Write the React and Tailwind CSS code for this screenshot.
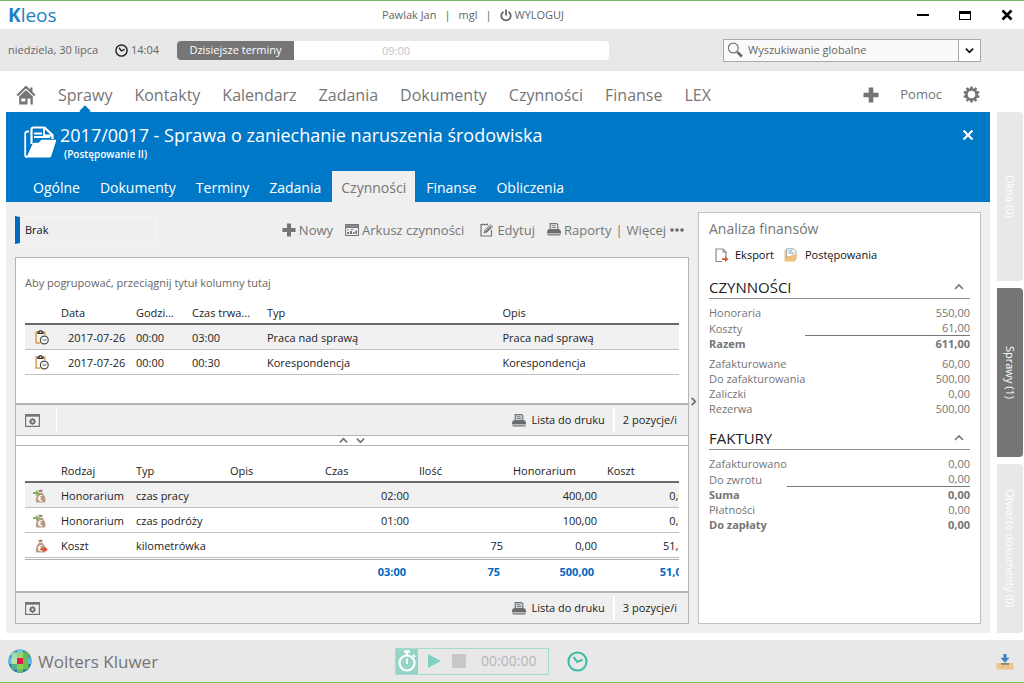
import React from "react";

const NAV = ["Sprawy", "Kontakty", "Kalendarz", "Zadania", "Dokumenty", "Czynności", "Finanse", "LEX"];
const TABS = ["Ogólne", "Dokumenty", "Terminy", "Zadania", "Czynności", "Finanse", "Obliczenia"];

const ACTIVITIES = [
  { date: "2017-07-26", time: "00:00", duration: "03:00", type: "Praca nad sprawą", note: "Praca nad sprawą" },
  { date: "2017-07-26", time: "00:00", duration: "00:30", type: "Korespondencja", note: "Korespondencja" },
];

const ITEMS = [
  { kind: "Honorarium", type: "czas pracy", time: "02:00", qty: "", fee: "400,00", cost: "0,00" },
  { kind: "Honorarium", type: "czas podróży", time: "01:00", qty: "", fee: "100,00", cost: "0,00" },
  { kind: "Koszt", type: "kilometrówka", time: "", qty: "75", fee: "0,00", cost: "51,00" },
];

const SECTIONS = [
  {
    title: "CZYNNOŚCI",
    rows: [
      { label: "Honoraria", value: "550,00" },
      { label: "Koszty", value: "61,00", line: true },
      { label: "Razem", value: "611,00", bold: true, gap: true },
      { label: "Zafakturowane", value: "60,00" },
      { label: "Do zafakturowania", value: "500,00" },
      { label: "Zaliczki", value: "0,00" },
      { label: "Rezerwa", value: "500,00" },
    ],
  },
  {
    title: "FAKTURY",
    rows: [
      { label: "Zafakturowano", value: "0,00" },
      { label: "Do zwrotu", value: "0,00", line: true },
      { label: "Suma", value: "0,00", bold: true },
      { label: "Płatności", value: "0,00" },
      { label: "Do zapłaty", value: "0,00", bold: true },
    ],
  },
];

function HomeIcon() {
  return (
    <svg width="20" height="20" viewBox="0 0 20 20" aria-hidden="true">
      <path d="M10 0.5 0.5 9.8l1.5 1.5L10 3.5l8 7.8 1.5-1.5-3-3V2.5h-2.3v2.1z" fill="#757575" />
      <path fillRule="evenodd" d="M10 5 3.2 11.6V19.5h8.3v-6h3v6h2.3v-7.9zM5.3 13.5h4v3h-4z" fill="#757575" />
    </svg>
  );
}

function PlusIcon({ size = 16 }) {
  return (
    <svg width={size} height={size} viewBox="0 0 16 16" aria-hidden="true">
      <path d="M5.7 0.5h4.6v5.2h5.2v4.6h-5.2v5.2H5.7v-5.2H0.5V5.7h5.2z" fill="#757575" />
    </svg>
  );
}

function GearIcon() {
  const teeth = [0, 36, 72, 108, 144, 180, 216, 252, 288, 324];
  return (
    <svg width="17" height="17" viewBox="0 0 17 17" aria-hidden="true">
      <circle cx="8.5" cy="8.5" r="5" fill="none" stroke="#757575" strokeWidth="2.5" />
      {teeth.map((a) => (
        <path key={a} d="M6.9 3.2 7.4 0.4h2.2l0.5 2.8z" fill="#757575" transform={`rotate(${a} 8.5 8.5)`} />
      ))}
    </svg>
  );
}

function ClockIcon({ size, color, width }) {
  return (
    <svg width={size} height={size} viewBox="0 0 20 20" fill="none" stroke={color} strokeWidth={width} aria-hidden="true">
      <circle cx="10" cy="10" r="8.6" />
      <path d="M6.3 5.8 9.8 10.5 14.8 8.2" />
    </svg>
  );
}

function PowerIcon() {
  return (
    <svg width="12" height="13" viewBox="0 0 12 13" fill="none" stroke="#666" strokeWidth="1.8" aria-hidden="true">
      <path d="M3.5 2.7a4.7 4.7 0 1 0 5 0M6 0.5v6" />
    </svg>
  );
}

function FolderIcon() {
  return (
    <svg width="33" height="33" viewBox="0 0 33 33" aria-hidden="true">
      <path d="M5 5.5H3.2Q1.2 5.5 1.2 8V29q0 2 2 2" fill="none" stroke="#fff" strokeWidth="1.8" />
      <path d="M7.5 18V3.5Q7.5 1.5 9.5 1.5H20.5L28.5 9V13" fill="none" stroke="#fff" strokeWidth="2.2" />
      <path d="M20 1.5V9.5H28.5" fill="none" stroke="#fff" strokeWidth="1.8" />
      <path d="M10 7.5h8M10 11h16" stroke="#fff" strokeWidth="1.8" />
      <path d="M2.5 31.5 8.5 18q.5-1.2 1.8-1.2h4.2l3-3h13.7q1.3 0 .9 1.3L27.3 30q-.6 1.5-2.2 1.5z" fill="#fff" />
    </svg>
  );
}

function SheetIcon() {
  return (
    <svg width="14" height="12" viewBox="0 0 14 12" aria-hidden="true">
      <path fillRule="evenodd" d="M0 0h14v12H0zM1 4v7h12V4z" fill="#757575" />
      <path d="M1 2h12" stroke="#b0b0b0" strokeWidth=".8" />
      <path d="M2 8h2v2H2zM5 7h2v3H5zM8 8h1.500v2H8zM10.300 6.500h1.700V10h-1.700zM2 5.500h1.500v1H2zM6 5h2v1H6z" fill="#757575" />
    </svg>
  );
}

function EditIcon() {
  return (
    <svg width="14" height="14" viewBox="0 0 14 14" aria-hidden="true">
      <path d="M8 1.5H1V13h10.5V7" fill="none" stroke="#757575" strokeWidth="1.2" />
      <path d="M2.5 .5v2M5 .5v2M7.5 .5v2" stroke="#757575" strokeWidth="1" />
      <path d="M3.5 10.5 4.5 7 10.5 1.2 13 3.5 7 9.6z" fill="#757575" />
      <path d="M5 8 11 2.5M9.6 1.8l2.6 2.6" stroke="#eee" strokeWidth=".8" />
    </svg>
  );
}

function PrinterIcon({ paper = "#efefef" }) {
  return (
    <svg width="14" height="13" viewBox="0 0 14 13" aria-hidden="true">
      <path d="M3.2 .6h6.5l1.1 1.1v5H3.2z" fill={paper} stroke="#757575" strokeWidth="1.2" />
      <path d="M4.8 2.7h3.7M4.8 4.5h4.5" stroke="#757575" strokeWidth=".9" />
      <path d="M1.3 6.3h11.4L14 8.3v2.2H0V8.300z" fill="#6b6b6b" />
      <path d="M.6 11h12.8v1.6H.6z" fill="#8a8a8a" />
      <path d="M1.5 10.7h11" stroke="#ccc" strokeWidth=".6" />
    </svg>
  );
}

function ClipboardIcon() {
  return (
    <svg width="14" height="15" viewBox="0 0 14 15" fill="none" aria-hidden="true">
      <path d="M3.2 2.2H1.1V13H5.5M7.8 2.2H9.8V5" stroke="#dc9b45" strokeWidth="1.5" />
      <path d="M3 3.3V1.9h1.2Q4.3.6 5.5.6T6.800 1.9H8v1.4z" fill="#fff" stroke="#333" strokeWidth="1.2" />
      <circle cx="9.3" cy="10" r="3.9" fill="#fff" stroke="#4a4a52" strokeWidth="1.2" />
      <path d="M7.6 9.2 9.3 10.6 11.5 9.2" stroke="#4a4a52" strokeWidth="1" />
    </svg>
  );
}

function MoneyBagIcon({ outgoing }) {
  return (
    <svg width="15" height="14" viewBox="0 0 15 14" aria-hidden="true">
      <path d="M5 .5 6.3 1.2 7.5.4 8.7 1.2 10 .5 8.9 3H6.1z" fill="#9c8672" />
      <path d="M5.5 3.7h4l2.5 4.3q1.5 3.2-.2 5.5H3.600q-1.700-2.300-.2-5.500z" fill="#b69a82" />
      <path d="M9.3 6.8Q6.3 5.8 6 9.2T9.3 11.6M4.8 8.5h3.3M4.8 10h3.3" fill="none" stroke="#fff" strokeWidth="1.1" />
      {outgoing ? (
        <path d="M7.5 9.3h3.5V7.3l3.9 3.1-3.9 3.1v-2H7.500z" fill="#dd5236" />
      ) : (
        <path d="M0 2.9h3V1L6.5 3.9 3 6.9V5H0z" fill="#86b05b" />
      )}
    </svg>
  );
}

function WindowGearIcon() {
  return (
    <svg width="15" height="13" viewBox="0 0 15 13" aria-hidden="true">
      <rect x=".6" y=".6" width="13.8" height="11.8" fill="none" stroke="#757575" strokeWidth="1.2" />
      <path d="M0 0h15v2.7H0z" fill="#757575" />
      <circle cx="7.5" cy="7.5" r="2.1" fill="none" stroke="#757575" strokeWidth="1.7" />
      <path d="M7.5 4v7M4 7.5h7M5 5l5 5M10 5l-5 5" stroke="#757575" strokeWidth=".9" />
      <circle cx="7.5" cy="7.5" r="1" fill="#efefef" />
    </svg>
  );
}

function Chevron({ d, color = "#757575", size = 10, width = 1.6 }) {
  const paths = { up: "M1 7 5 3l4 4", down: "M1 3l4 4 4-4", right: "M3 1l4 4-4 4" };
  return (
    <svg width={size} height={size} viewBox="0 0 10 10" fill="none" stroke={color} strokeWidth={width} aria-hidden="true">
      <path d={paths[d]} />
    </svg>
  );
}

function ExportIcon() {
  return (
    <svg width="14" height="15" viewBox="0 0 14 15" aria-hidden="true">
      <path d="M7 13.5H1V1H8l3 3v5" fill="none" stroke="#8b8b8b" strokeWidth="1.2" />
      <path d="M8 1v3.2h3" fill="none" stroke="#8b8b8b" />
      <path d="M7 10.3h3V8.3l3.5 2.9L10 14.1v-2H7z" fill="#d2552f" />
    </svg>
  );
}

function CasesIcon() {
  return (
    <svg width="14" height="14" viewBox="0 0 14 14" aria-hidden="true">
      <path d="M.3 2.5 3.5 1v12L.3 13.5z" fill="#f0cf94" />
      <path d="M2.5.8h7L12 3.2V11H2.5z" fill="#fff" stroke="#9aa4ab" strokeWidth="1" />
      <path d="M4.3 3h4M4.3 5h6" stroke="#7f9bb0" strokeWidth="1" />
      <path d="M1 13.5 3.500 8h3l1.5-1.5H13.5L11 13.5z" fill="#eec07c" />
    </svg>
  );
}

function WkLogo() {
  return (
    <svg width="24" height="24" viewBox="0 0 24 24" aria-hidden="true">
      <defs>
        <clipPath id="globe"><circle cx="12" cy="12" r="11.5" /></clipPath>
      </defs>
      <g clipPath="url(#globe)">
        <path d="M0 0h24v24H0z" fill="#3a8fc8" />
        <path d="M0 13h24v11H0z" fill="#1f72b4" />
        <path d="M3.5 3.5h17v17h-17z" fill="#6cc04a" />
        <path d="M9 0h6v4H9z" fill="#6fc5d8" />
        <path d="M9 20h6v4H9z" fill="#69bb6c" />
        <path d="M0 9h4v6H0zM20 9h4v6h-4z" fill="#5cb8e0" />
        <path d="M3.5 3.5H9V9H3.5z" fill="#a3d9b8" />
        <path d="M15 3.5h5.5V9H15z" fill="#62bb52" />
        <path d="M3.5 15H9v5.5H3.5z" fill="#55b08a" />
        <path d="M9 3.5h6V9H9z" fill="#9fd56e" />
        <path d="M3.5 9H9v6H3.5z" fill="#b9e29c" />
        <path d="M9 15h6v5.5H9z" fill="#8acb52" />
        <path d="M9 9h6v6H9z" fill="#e5174f" />
      </g>
    </svg>
  );
}

function StopwatchIcon() {
  return (
    <svg width="20" height="22" viewBox="0 0 20 22" fill="none" stroke="#fff" aria-hidden="true">
      <circle cx="10" cy="13" r="7.5" strokeWidth="2.2" />
      <path d="M7 1.5h6M10 2v4M16 5l2 2" strokeWidth="2.4" />
      <path d="M10 8.5V14" strokeWidth="1.8" />
    </svg>
  );
}

function DownloadIcon() {
  return (
    <svg width="18" height="17" viewBox="0 0 18 17" aria-hidden="true">
      <path d="M.5 10H17.5V16.5H.5z" fill="#eac58c" />
      <path d="M5 10h8v1.8H5z" fill="#8a7f78" />
      <path d="M7.5 1h3v3.8h3L9 9.8 4.5 4.8h3z" fill="#3d7fc0" />
    </svg>
  );
}

function SearchIcon() {
  return (
    <svg width="16" height="16" viewBox="0 0 16 16" fill="none" aria-hidden="true">
      <circle cx="6.3" cy="6" r="4.9" stroke="#777" strokeWidth="1.2" />
      <path d="M9.8 9.5 11 10.7" stroke="#777" strokeWidth="1.5" />
      <path d="M10.8 10.5 14.8 14.5" stroke="#666" strokeWidth="2.6" />
    </svg>
  );
}

function GridFooter({ count, divider }) {
  return (
    <div className="flex h-8 shrink-0 items-center border-t-2 border-[#b5b5b5] bg-[#efefef] pl-[9px] pr-[11px]">
      <button type="button" aria-label="Ustawienia widoku"><WindowGearIcon /></button>
      {divider && <span className="ml-4 h-6 w-px bg-white" />}
      <button type="button" className="ml-auto flex items-center gap-[5px]">
        <PrinterIcon paper="#c9d9e6" />
        Lista do druku
      </button>
      <span className="mx-2 h-6 w-0.5 bg-white" />
      <span>{count} pozycje/i</span>
    </div>
  );
}

function TopBar() {
  return (
    <div className="flex h-[29px] items-center border-t border-[#7db46c]">
      <span className="w-[37%] pl-2 text-[19px] leading-6 font-medium text-[#1d7fc4]"><b className="font-bold">K</b>leos</span>
      <div className="flex items-center gap-2 pl-[3px] text-[#666]">
        <span>Pawlak Jan</span><span>|</span><span>mgl</span><span>|</span>
        <button type="button" className="flex items-center gap-[3px]"><PowerIcon />WYLOGUJ</button>
      </div>
      <div className="ml-auto flex items-center gap-[29px] pr-2.5">
        <button type="button" aria-label="Minimalizuj"><svg width="13" height="12"><path d="M0 5h12v2H0z" /></svg></button>
        <button type="button" aria-label="Maksymalizuj"><svg width="13" height="12"><path fillRule="evenodd" d="M0 2h12v9H0zM1 5v5h10V5z" /></svg></button>
        <button type="button" aria-label="Zamknij"><svg width="13" height="12"><path d="M1.5 1.5l9 9M10.5 1.5l-9 9" stroke="#000" strokeWidth="2.6" /></svg></button>
      </div>
    </div>
  );
}

function StatusBar() {
  return (
    <div className="flex h-[42px] items-center bg-[#e8e8e8] pl-2 pr-[43px]">
      <span className="w-[107px] shrink-0 whitespace-nowrap text-[#666]">niedziela, 30 lipca</span>
      <div className="flex w-[62px] shrink-0 items-center gap-[3px] text-[#666]"><ClockIcon size={13} color="#222" width={2.2} />14:04</div>
      <div className="flex h-[19px] w-[432px] overflow-hidden rounded-sm bg-white">
        <button type="button" className="w-[117px] bg-[#757575] text-white">Dzisiejsze terminy</button>
        <span className="pl-[88px] leading-5 text-[#c4c4c4]">09:00</span>
      </div>
      <div className="ml-auto flex h-[23px] w-[258px] items-center border border-[#a9a9a9] bg-[#fafafa]">
        <label htmlFor="search" className="pl-[3px]" aria-label="Szukaj"><SearchIcon /></label>
        <input id="search" type="text" placeholder="Wyszukiwanie globalne" className="w-0 flex-1 pl-[5px] outline-none placeholder:text-[#666]" />
        <button type="button" aria-label="Zakres wyszukiwania" className="flex w-[22px] items-center justify-center self-stretch border-l border-[#a9a9a9] bg-white">
          <Chevron d="down" color="#111" size={9} width={2} />
        </button>
      </div>
    </div>
  );
}

function NavBar() {
  return (
    <nav className="flex h-[41px] items-center pr-11 pl-4 pt-1.5 text-base text-[#757575]">
      <a href="#home" aria-label="Start" className="mr-[22px]"><HomeIcon /></a>
      <div className="flex items-center gap-[22px]">
        {NAV.map((item, i) => (
          <a key={item} href={"#" + item} className="relative leading-6">
            {item}
            {i === 0 && <span className="absolute top-6 left-1/2 size-2 -translate-x-1/2 rotate-45 bg-[#0078c8]" />}
          </a>
        ))}
      </div>
      <div className="ml-auto flex items-center gap-[21px]">
        <button type="button" aria-label="Dodaj"><PlusIcon /></button>
        <a href="#pomoc" className="text-[13px]">Pomoc</a>
        <button type="button" aria-label="Ustawienia"><GearIcon /></button>
      </div>
    </nav>
  );
}

function CaseHeader() {
  return (
    <header className="relative z-10 flex h-[90px] shrink-0 flex-col justify-between bg-[#0078c8] pt-[7px] text-white">
      <div className="flex items-start pl-[18px]">
        <span className="pt-[7px]"><FolderIcon /></span>
        <div className="pl-[3px]">
          <h1 className="text-lg leading-8">2017/0017 - Sprawa o zaniechanie naruszenia środowiska</h1>
          <p className="-mt-[3px] pl-1 text-[10px] leading-3 font-semibold">(Postępowanie II)</p>
        </div>
        <button type="button" aria-label="Zamknij sprawę" className="mt-2.5 mr-4 ml-auto">
          <svg width="12" height="12"><path d="M1.5 1.5l9 9M10.5 1.5l-9 9" stroke="#fff" strokeWidth="2.2" /></svg>
        </button>
      </div>
      <div className="flex gap-0.5 pl-[18px] text-sm">
        {TABS.map((tab) => (
          <button key={tab} type="button" className={tab === "Czynności" ? "h-[31px] bg-[#efefef] px-[9px] pt-0.5 text-[#757575]" : "h-[31px] px-[9px] pt-0.5"}>
            {tab}
          </button>
        ))}
      </div>
    </header>
  );
}

function Toolbar() {
  return (
    <div className="flex h-[55px] shrink-0 items-center text-[13px] text-[#757575]">
      <div className="flex h-7 w-[141px] items-center border border-l-5 border-[#f4f4f4] border-l-[#0068c0] pl-[5px] text-[11px] text-[#111]">Brak</div>
      <div className="ml-auto flex items-center pr-[5px]">
        <button type="button" className="flex items-center gap-[3px]"><PlusIcon size={14} />Nowy</button>
        <button type="button" className="ml-3 flex items-center gap-[3px]"><SheetIcon />Arkusz czynności</button>
        <button type="button" className="ml-4 flex items-center gap-[3px]"><EditIcon />Edytuj</button>
        <button type="button" className="ml-3 flex items-center gap-[3px]"><PrinterIcon />Raporty</button>
        <span className="mx-1">|</span>
        <button type="button" className="flex items-center gap-1">
          Więcej
          <svg width="14" height="4" fill="#666"><circle cx="2" cy="2" r="1.8" /><circle cx="7" cy="2" r="1.8" /><circle cx="12" cy="2" r="1.8" /></svg>
        </button>
      </div>
    </div>
  );
}

const HEAD = "h-[22px] border-b-2 border-[#6a6a6a] pb-px text-left font-normal";
const CELL = "h-[25px] border-b border-[#c0c0c0] pt-px";

function ActivitiesTable() {
  return (
    <table className="w-full table-fixed border-separate border-spacing-0">
      <colgroup>
        <col className="w-9" /><col className="w-[75px]" /><col className="w-14" /><col className="w-[75px]" /><col className="w-[36%]" /><col />
      </colgroup>
      <thead>
        <tr>
          <th className={HEAD}></th>
          <th className={HEAD}>Data</th>
          <th className={HEAD}>Godzi...</th>
          <th className={HEAD}>Czas trwa...</th>
          <th className={HEAD}>Typ</th>
          <th className={HEAD}>Opis</th>
        </tr>
      </thead>
      <tbody>
        {ACTIVITIES.map((r, i) => (
          <tr key={r.type} className={i === 0 ? "bg-[#f1f1f1]" : ""}>
            <td className={CELL + " pl-2.5"}><ClipboardIcon /></td>
            <td className={CELL + " pl-[7px] whitespace-nowrap"}>{r.date}</td>
            <td className={CELL}>{r.time}</td>
            <td className={CELL}>{r.duration}</td>
            <td className={CELL}>{r.type}</td>
            <td className={CELL}>{r.note}</td>
          </tr>
        ))}
      </tbody>
    </table>
  );
}

function ItemsTable() {
  const total = "h-6 pr-[13px] text-right font-bold text-[#0068c0]";
  const rule = "h-0.5 border-b border-[#b0b0b0] p-0";
  return (
    <div className="overflow-hidden">
      <table className="w-[calc(100%+22px)] table-fixed border-separate border-spacing-0">
        <colgroup>
          <col className="w-9" /><col className="w-[75px]" /><col className="w-[94px]" /><col /><col className="w-[94px]" /><col className="w-[94px]" /><col className="w-[94px]" /><col className="w-[94px]" />
        </colgroup>
        <thead>
          <tr>
            <th className={HEAD}></th>
            <th className={HEAD}>Rodzaj</th>
            <th className={HEAD}>Typ</th>
            <th className={HEAD}>Opis</th>
            <th className={HEAD}>Czas</th>
            <th className={HEAD}>Ilość</th>
            <th className={HEAD}>Honorarium</th>
            <th className={HEAD}>Koszt</th>
          </tr>
        </thead>
        <tbody>
          {ITEMS.map((r, i) => (
            <tr key={r.type} className={i === 0 ? "bg-[#f1f1f1]" : ""}>
              <td className={CELL + " pl-2"}><MoneyBagIcon outgoing={r.kind === "Koszt"} /></td>
              <td className={CELL}>{r.kind}</td>
              <td className={CELL}>{r.type}</td>
              <td className={CELL}></td>
              <td className={CELL + " pr-2.5 text-right"}>{r.time}</td>
              <td className={CELL + " pr-2.5 text-right"}>{r.qty}</td>
              <td className={CELL + " pr-2.5 text-right"}>{r.fee}</td>
              <td className={CELL + " pr-2.5 text-right"}>{r.cost}</td>
            </tr>
          ))}
        </tbody>
        <tfoot>
          <tr><td colSpan={8} className={rule}></td></tr>
          <tr>
            <td colSpan={4}></td>
            <td className={total}>03:00</td>
            <td className={total}>75</td>
            <td className={total}>500,00</td>
            <td className={total}>51,00</td>
          </tr>
        </tfoot>
      </table>
    </div>
  );
}

function FinancePanel() {
  return (
    <aside className="w-[283px] shrink-0 border border-[#c0c0c0] bg-white px-2.5 pt-1.5 text-[#757575]">
      <h2 className="text-sm leading-5">Analiza finansów</h2>
      <div className="mt-1.5 flex h-5 items-center pl-1.5 text-[#111]">
        <button type="button" className="flex items-center gap-1.5"><ExportIcon />Eksport</button>
        <button type="button" className="ml-2.5 flex items-center gap-[7px]"><CasesIcon />Postępowania</button>
      </div>
      {SECTIONS.map((s) => (
        <section key={s.title} className="mt-2.5">
          <button type="button" className="flex h-6 w-full items-center justify-between border-b border-[#8f8f8f] pr-1.5 text-[#222]">
            <span className="text-[15px] leading-5">{s.title}</span>
            <Chevron d="up" />
          </button>
          <table className="mt-1.5 w-full border-separate border-spacing-0 leading-[15px]">
            <tbody>
              {s.rows.map((r) => (
                <tr key={r.label}>
                  <th scope="row" className={"w-px p-0 text-left whitespace-nowrap " + (r.bold ? "font-bold" : "font-normal") + (r.gap ? " pb-[5px]" : "")}>{r.label}</th>
                  <td className={"p-0 text-right" + (r.bold ? " font-bold" : "") + (r.line ? " border-b border-[#777]" : "") + (r.gap ? " pb-[5px]" : "")}>{r.value}</td>
                </tr>
              ))}
            </tbody>
          </table>
        </section>
      ))}
    </aside>
  );
}

function SideTabs() {
  const base = "flex flex-1 items-center justify-center rounded-r-sm [writing-mode:vertical-rl]";
  return (
    <div className="flex w-[26px] shrink-0 flex-col gap-[7px]">
      <button type="button" className={base + " bg-[#e8e8e8] text-white"}>Okna (0)</button>
      <button type="button" className={base + " bg-[#757575] text-white"}>Sprawy (1)</button>
      <button type="button" className={base + " bg-[#e8e8e8] text-white"}>Otwarte dokumenty (0)</button>
    </div>
  );
}

function Footer() {
  return (
    <footer className="mt-[7px] flex h-[43px] items-center border-b border-[#7ac143] bg-[#e8e8e8] pr-2.5">
      <div className="flex w-[39%] items-center gap-1.5 pl-2 text-[17px] text-[#757575]"><WkLogo /><span className="pt-0.5">Wolters Kluwer</span></div>
      <div className="flex h-[27px] w-[154px] items-center border border-[#a5dccf] pr-3 text-sm text-[#b5b5b5]">
        <button type="button" aria-label="Stoper" className="flex h-full w-[22px] items-center justify-center bg-[#93d6c8]"><StopwatchIcon /></button>
        <button type="button" aria-label="Start" className="ml-2.5"><svg width="14" height="14"><path d="M0 0 13 7 0 14z" fill="#83d0c0" /></svg></button>
        <button type="button" aria-label="Stop" className="ml-2.5"><svg width="14" height="14"><path d="M0 0h14v14H0z" fill="#c8c8c8" /></svg></button>
        <span className="ml-auto">00:00:00</span>
      </div>
      <button type="button" aria-label="Historia czasu" className="ml-[18px]"><ClockIcon size={21} color="#3dbda5" width={2} /></button>
      <button type="button" aria-label="Pobrane" className="ml-auto"><DownloadIcon /></button>
    </footer>
  );
}

export default function App() {
  return (
    <div className="flex min-h-screen flex-col bg-white font-['Open_Sans','Noto_Sans',sans-serif] text-[11px] leading-4 text-[#222]">
      <TopBar />
      <StatusBar />
      <NavBar />
      <div className="flex flex-1 gap-[7px] pr-px pl-1.5">
        <main className="flex min-w-0 flex-1 flex-col bg-[#efefef]">
          <CaseHeader />
          <div className="flex flex-1 px-[9px] pb-[9px]">
            <div className="flex min-w-0 flex-1 flex-col">
              <Toolbar />
              <div className="flex flex-1 flex-col border border-[#b5b5b5] bg-white">
                <div className="flex-1 px-[9px] pt-[15px]">
                  <p className="mb-2.5 leading-5 text-[#666]">Aby pogrupować, przeciągnij tytuł kolumny tutaj</p>
                  <ActivitiesTable />
                </div>
                <GridFooter count={2} divider />
                <div className="flex h-[11px] shrink-0 items-center justify-center gap-2 border-y border-[#b5b5b5]">
                  <button type="button" aria-label="Zwiń górny panel"><Chevron d="up" size={9} width={2} /></button>
                  <button type="button" aria-label="Zwiń dolny panel"><Chevron d="down" size={9} width={2} /></button>
                </div>
                <div className="flex-1 px-[9px] pt-[15px]">
                  <ItemsTable />
                </div>
                <GridFooter count={3} />
              </div>
            </div>
            <button type="button" aria-label="Zwiń panel boczny" className="flex w-[9px] shrink-0 items-center justify-center pb-6">
              <Chevron d="right" size={9} width={2} />
            </button>
            <div className="flex pt-2.5">
              <FinancePanel />
            </div>
          </div>
        </main>
        <SideTabs />
      </div>
      <Footer />
    </div>
  );
}
